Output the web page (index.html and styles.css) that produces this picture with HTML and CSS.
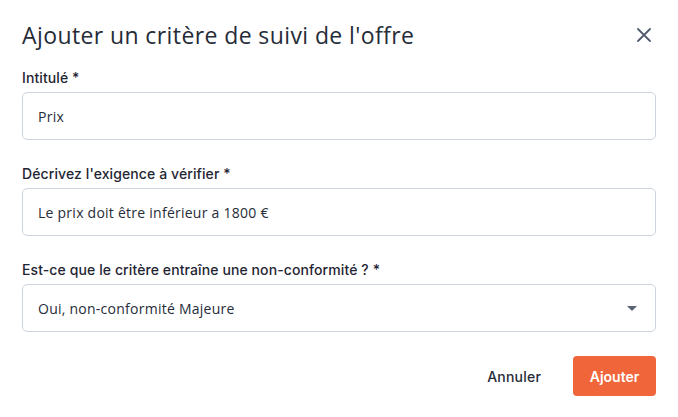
FILE: index.html
```html
<!DOCTYPE html>
<html lang="fr">
<head>
<meta charset="utf-8">
<link rel="stylesheet" href="styles.css">
</head>
<body>
<div class="dialog">
  <div class="header">
    <h1 class="title">Ajouter un critère de suivi de l'offre</h1>
    <button class="close" aria-label="Fermer">
      <svg width="14" height="14" viewBox="0 0 14 14"><path d="M1 1L13 13M13 1L1 13" stroke="#525c6e" stroke-width="1.8" stroke-linecap="round"/></svg>
    </button>
  </div>
  <div class="field">
    <label class="label">Intitulé *</label>
    <div class="input">Prix</div>
  </div>
  <div class="field">
    <label class="label">Décrivez l'exigence à vérifier *</label>
    <div class="input">Le prix doit être inférieur a 1800 €</div>
  </div>
  <div class="field">
    <label class="label">Est-ce que le critère entraîne une non-conformité ? *</label>
    <div class="input select">
      <span>Oui, non-conformité Majeure</span>
      <svg class="caret" width="10" height="5" viewBox="0 0 10 5"><path d="M0 0H10L5 5Z" fill="#5a6375"/></svg>
    </div>
  </div>
  <div class="actions">
    <button class="btn btn-ghost">Annuler</button>
    <button class="btn btn-primary">Ajouter</button>
  </div>
</div>
</body>
</html>
```
FILE: styles.css
```css
* { box-sizing: border-box; }
html, body { margin: 0; padding: 0; background: #fff; }
body {
  font-family: "Inter", "Open Sans", sans-serif;
  color: #1f2533;
}
.dialog {
  width: 678px;
  height: 417px;
  padding: 18px 22px 21px 22px;
  display: flex;
  flex-direction: column;
}
.header {
  display: flex;
  align-items: center;
  justify-content: space-between;
  height: 34px;
  margin-bottom: 16px;
}
.title {
  margin: 0;
  font-family: "Open Sans", sans-serif;
  font-size: 23px;
  font-weight: 400;
  color: #262c38;
  letter-spacing: 0.4px;
}
.close {
  border: 0;
  background: none;
  padding: 0;
  margin-right: 5px;
  width: 14px;
  height: 14px;
  display: flex;
}
.field {
  display: flex;
  flex-direction: column;
  gap: 4px;
  margin-bottom: 24px;
}
.label {
  font-size: 14px;
  font-weight: 500;
  line-height: 20px;
  color: #1f2533;
  letter-spacing: 0.1px;
}
.input {
  height: 48px;
  border: 1px solid #cdd4e0;
  border-radius: 5px;
  padding: 0 15px;
  display: flex;
  align-items: center;
  font-family: "Open Sans", sans-serif;
  font-size: 14px;
  color: #262c38;
  letter-spacing: 0.25px;
}
.select {
  justify-content: space-between;
  padding-right: 18px;
}
.actions {
  display: flex;
  justify-content: flex-end;
  align-items: center;
  gap: 16px;
}
.btn {
  font-family: inherit;
  font-size: 14px;
  font-weight: 600;
  height: 40px;
  border: 0;
  border-radius: 4px;
  padding: 0 18px;
  cursor: pointer;
}
.btn-ghost {
  background: none;
  color: #262c38;
  font-weight: 500;
  padding: 0 16px;
  letter-spacing: 0.2px;
}
.btn-primary {
  background: #f0653a;
  color: #fff;
  width: 83px;
  padding: 0;
}
```
